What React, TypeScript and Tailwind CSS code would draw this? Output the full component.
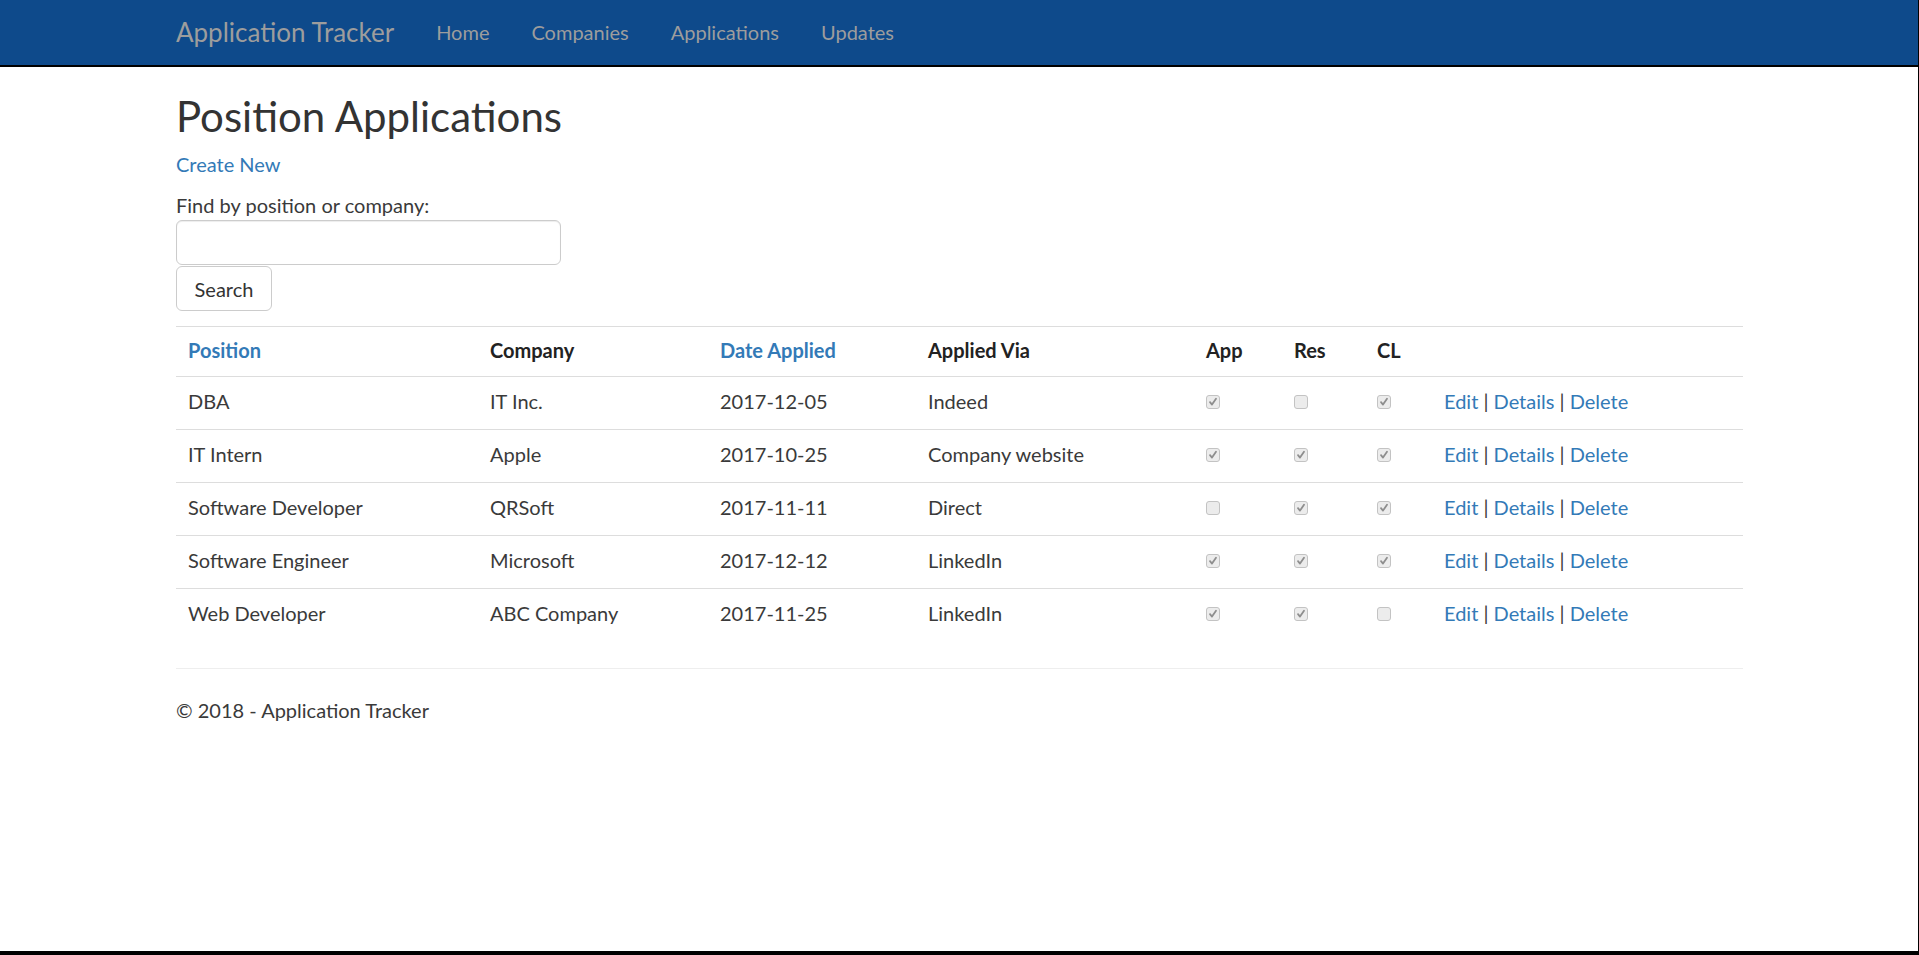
import React from "react";

type Row = {
  position: string;
  company: string;
  date: string;
  via: string;
  flags: [boolean, boolean, boolean];
};

const rows: Row[] = [
  { position: "DBA", company: "IT Inc.", date: "2017-12-05", via: "Indeed", flags: [true, false, true] },
  { position: "IT Intern", company: "Apple", date: "2017-10-25", via: "Company website", flags: [true, true, true] },
  { position: "Software Developer", company: "QRSoft", date: "2017-11-11", via: "Direct", flags: [false, true, true] },
  { position: "Software Engineer", company: "Microsoft", date: "2017-12-12", via: "LinkedIn", flags: [true, true, true] },
  { position: "Web Developer", company: "ABC Company", date: "2017-11-25", via: "LinkedIn", flags: [true, true, false] },
];

const cols = "grid grid-cols-[302px_230px_208px_278px_88px_83px_69px_309px]";

function Check({ checked }: { checked: boolean }) {
  return (
    <div className="mt-[8px] w-[14px] h-[14px] rounded-[3px] border border-[#c3c3c3] bg-[#ececec] flex items-center justify-center">
      {checked && (
        <svg width="10" height="10" viewBox="0 0 10 10">
          <path d="M2 5.2 L4 7.6 L8 1.8" fill="none" stroke="#8e8e8e" strokeWidth="1.8" strokeLinecap="round" strokeLinejoin="round" />
        </svg>
      )}
    </div>
  );
}

export default function App() {
  return (
    <div className="w-[1919px] h-[955px] bg-black overflow-hidden font-['Lato','Noto_Sans',sans-serif]">
      <div className="w-[1918px] h-[951px] bg-white overflow-hidden text-[#3a3a3a]">
        <nav className="h-[67px] bg-[#0e4a8b] border-b-2 border-black">
          <div className="h-[63px] pl-[176px] flex items-center">
            <a className="text-[26px] leading-[30px] text-[#9d9d9d] mr-[42px]">Application Tracker</a>
            <div className="flex items-center gap-[42px] text-[20px] leading-[28px] text-[#9d9d9d]">
              <a>Home</a>
              <a>Companies</a>
              <a>Applications</a>
              <a>Updates</a>
            </div>
          </div>
        </nav>

        <main className="ml-[176px] w-[1567px]">
          <h2 className="mt-[26px] text-[42px] leading-[46px] font-normal text-[#333]">Position Applications</h2>
          <p className="mt-[11px] text-[20px] leading-[28px]">
            <a className="text-[#337ab7]">Create New</a>
          </p>
          <div className="mt-[13px] text-[20px] leading-[28px]">Find by position or company:</div>
          <input
            type="text"
            className="mt-[1px] block w-[385px] h-[45px] rounded-[6px] border border-[#ccc] bg-white shadow-[inset_0_1px_1px_rgba(0,0,0,0.075)] outline-none px-[17px] text-[20px]"
          />
          <button className="mt-[1px] block w-[96px] h-[45px] rounded-[6px] border border-[#ccc] bg-white text-[20px] leading-[28px] text-[#333]">
            Search
          </button>

          <div className="mt-[15px] text-[20px] leading-[28px]">
            <div className={`${cols} h-[50px] border-t border-[#ddd] font-bold`}>
              <div className="pl-[12px] pt-[9px] text-[#337ab7]">Position</div>
              <div className="pl-[12px] pt-[9px] text-[#222]">Company</div>
              <div className="pl-[12px] pt-[9px] text-[#337ab7]">Date Applied</div>
              <div className="pl-[12px] pt-[9px] text-[#222]">Applied Via</div>
              <div className="pl-[12px] pt-[9px] text-[#222]">App</div>
              <div className="pl-[12px] pt-[9px] text-[#222]">Res</div>
              <div className="pl-[12px] pt-[9px] text-[#222]">CL</div>
              <div className="pl-[12px] pt-[9px]"></div>
            </div>
            {rows.map((r) => (
              <div key={r.position} className={`${cols} h-[53px] border-t border-[#ddd]`}>
                <div className="pl-[12px] pt-[10px]">{r.position}</div>
                <div className="pl-[12px] pt-[10px]">{r.company}</div>
                <div className="pl-[12px] pt-[10px]">{r.date}</div>
                <div className="pl-[12px] pt-[10px]">{r.via}</div>
                <div className="pl-[12px] pt-[10px]"><Check checked={r.flags[0]} /></div>
                <div className="pl-[12px] pt-[10px]"><Check checked={r.flags[1]} /></div>
                <div className="pl-[12px] pt-[10px]"><Check checked={r.flags[2]} /></div>
                <div className="pl-[10px] pt-[10px]">
                  <a className="text-[#337ab7]">Edit</a> | <a className="text-[#337ab7]">Details</a> |{" "}
                  <a className="text-[#337ab7]">Delete</a>
                </div>
              </div>
            ))}
          </div>

          <hr className="mt-[27px] border-0 border-t border-[#eee]" />
          <footer className="mt-[27px] text-[20px] leading-[28px]">
            <p>© 2018 - Application Tracker</p>
          </footer>
        </main>
      </div>
    </div>
  );
}
